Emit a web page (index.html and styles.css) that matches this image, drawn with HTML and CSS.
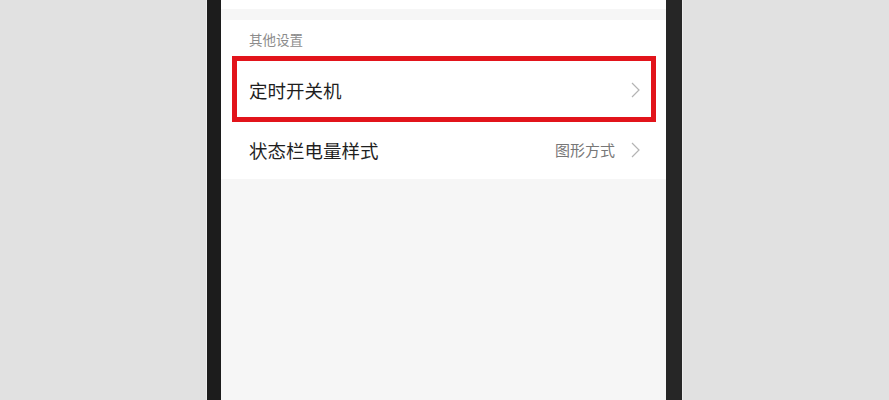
FILE: index.html
```html
<!DOCTYPE html>
<html lang="zh-CN">
<head>
<meta charset="utf-8">
<title>其他设置</title>
<link rel="stylesheet" href="styles.css">
</head>
<body>
<div class="stage">
  <div class="phone">
    <div class="screen">
      <div class="top-strip"></div>
      <div class="card">
        <div class="section-title">其他设置</div>
        <div class="row row-first">
          <span class="label">定时开关机</span>
          <span class="right">
            <svg class="chev" viewBox="0 0 9 16" width="9" height="16"><path d="M1 1 L8 8 L1 15" fill="none" stroke="#b4b4b4" stroke-width="1.2"/></svg>
          </span>
          <div class="highlight"></div>
        </div>
        <div class="row">
          <span class="label">状态栏电量样式</span>
          <span class="right">
            <span class="value">图形方式</span>
            <svg class="chev" viewBox="0 0 9 16" width="9" height="16"><path d="M1 1 L8 8 L1 15" fill="none" stroke="#b4b4b4" stroke-width="1.2"/></svg>
          </span>
        </div>
      </div>
    </div>
  </div>
</div>
</body>
</html>
```

FILE: styles.css
```css
html, body {
  margin: 0;
  padding: 0;
  height: 100%;
}
body {
  background: #e1e1e1;
  font-family: "Noto Sans CJK SC", "Noto Sans", sans-serif;
  overflow: hidden;
}
.stage {
  display: flex;
  justify-content: center;
  height: 400px;
}
.phone {
  display: flex;
  width: 445px;
  height: 400px;
  border-left: 14px solid #1c1c1c;
  border-right: 16px solid #262626;
  box-shadow: -1px 0 0 #ececec, 1px 0 0 #ececec;
}
.screen {
  flex: 1;
  background: #f6f6f6;
  display: flex;
  flex-direction: column;
}
.top-strip {
  height: 9px;
  background: #ffffff;
  margin-bottom: 11px;
}
.card {
  background: #ffffff;
  display: flex;
  flex-direction: column;
}
.section-title {
  height: 40px;
  padding-left: 28px;
  font-size: 13.5px;
  color: #8c8c8c;
  display: flex;
  align-items: center;
  padding-bottom: 2px;
  box-sizing: border-box;
}
.row {
  position: relative;
  height: 59px;
  display: flex;
  align-items: center;
  justify-content: space-between;
  padding: 0 26px 0 28px;
}
.row-first {
  height: 60px;
}
.label {
  font-size: 18.5px;
  color: #1f1f1f;
  letter-spacing: 0;
}
.right {
  display: flex;
  align-items: center;
  gap: 16px;
}
.value {
  font-size: 15px;
  color: #777777;
}
.chev {
  display: block;
}
.highlight {
  position: absolute;
  left: 11px;
  top: -4px;
  width: 424px;
  height: 66px;
  box-sizing: border-box;
  border: 5px solid #e2141b;
}
```
